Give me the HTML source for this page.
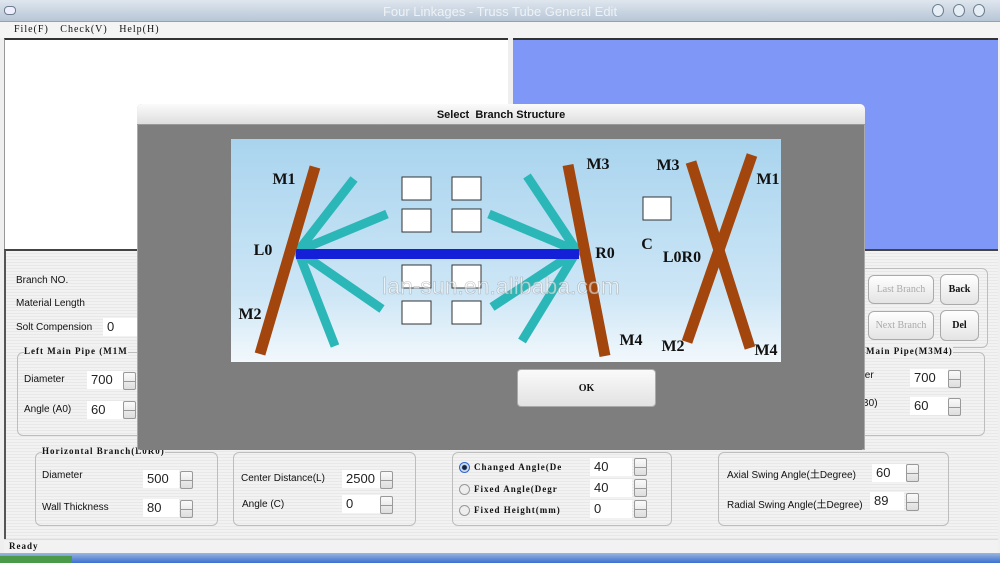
<!DOCTYPE html>
<html><head><meta charset="utf-8"><style>
*{margin:0;padding:0;box-sizing:border-box}
body{width:1000px;height:563px;overflow:hidden;position:relative;background:#efefef;font-family:"Liberation Sans",sans-serif;font-size:10px;color:#111}
.a{position:absolute}
.serif{font-family:"Liberation Serif","Noto Serif CJK SC",serif;font-weight:bold;letter-spacing:1px}
.inp{position:absolute;background:#fff;font-size:13px;padding:1px 4px;height:18px;color:#222}
.spin{position:absolute;width:13px;height:18px;border:1px solid #999;border-radius:2px;background:linear-gradient(#fafafa,#ddd)}
.spin:after{content:"";position:absolute;left:0;right:0;top:8px;border-top:1px solid #999}
.grp{position:absolute;border:1px solid #bdbdbd;border-radius:6px}
.btn{position:absolute;border:1px solid #aaa;border-radius:6px;background:linear-gradient(#fff,#e4e4e4);text-align:center;font-family:"Liberation Serif",serif;font-weight:bold;font-size:10px}
.radio{position:absolute;width:11px;height:11px;border-radius:50%;border:1px solid #999;background:#eee}
</style></head><body>
<div class="a" style="left:0;top:0;width:1000px;height:22px;background:linear-gradient(#dfe6ee,#b7c6d6);border-bottom:1px solid #8fa3b8"></div>
<div class="a" style="left:4px;top:6px;width:12px;height:9px;border:1px solid #6d7d8d;border-radius:4px;background:#eef"></div>
<div class="a" style="left:0;top:4px;width:1000px;text-align:center;font-size:13px;color:#eef2f6">Four Linkages - Truss Tube General Edit</div>
<div class="a" style="left:932px;top:4px;width:12px;height:13px;border:1px solid #6d7d8d;border-radius:50%;background:#e6eef6"></div>
<div class="a" style="left:953px;top:4px;width:12px;height:13px;border:1px solid #6d7d8d;border-radius:50%;background:#e6eef6"></div>
<div class="a" style="left:973px;top:4px;width:12px;height:13px;border:1px solid #6d7d8d;border-radius:50%;background:#e6eef6"></div>
<div class="a" style="left:0;top:22px;width:1000px;height:16px;background:#f4f4f4"></div>
<div class="a serif" style="left:14px;top:24px;font-size:10px;font-weight:normal;word-spacing:8px">File(F) Check(V) Help(H)</div>
<div class="a" style="left:4px;top:38px;width:504px;height:211px;background:#fff;border-top:2px solid #333;border-left:1px solid #999"></div>
<div class="a" style="left:513px;top:38px;width:485px;height:211px;background:#7f98f8;border-top:2px solid #333"></div>
<div class="a" style="left:4px;top:249px;width:994px;height:290px;background:repeating-linear-gradient(#f2f2f2 0 2px,#e8e8e8 2px 3px);border-top:2px solid #444;border-left:2px solid #555"></div>
<div class="a" style="left:16px;top:275px;font-size:10px">Branch NO.</div>
<div class="a" style="left:16px;top:298px;font-size:10px">Material Length</div>
<div class="a" style="left:16px;top:322px;font-size:10px">Solt Compension</div>
<div class="inp" style="left:103px;top:318px;width:36px">0</div>
<div class="grp" style="left:17px;top:352px;width:130px;height:84px"></div>
<div class="a serif" style="left:24px;top:346px;font-size:9px;background:#efefef">Left Main Pipe (M1M</div>
<div class="a" style="left:24px;top:374px">Diameter</div>
<div class="inp" style="left:87px;top:371px;width:36px">700</div><div class="spin" style="left:123px;top:372px"></div>
<div class="a" style="left:24px;top:404px">Angle (A0)</div>
<div class="inp" style="left:87px;top:401px;width:36px">60</div><div class="spin" style="left:123px;top:401px"></div>
<div class="grp" style="left:860px;top:268px;width:128px;height:80px"></div>
<div class="btn" style="left:868px;top:275px;width:66px;height:29px;line-height:28px;color:#aaa;font-weight:normal">Last Branch</div>
<div class="btn" style="left:940px;top:274px;width:39px;height:31px;line-height:30px">Back</div>
<div class="btn" style="left:868px;top:311px;width:66px;height:29px;line-height:28px;color:#aaa;font-weight:normal">Next Branch</div>
<div class="btn" style="left:940px;top:310px;width:39px;height:31px;line-height:30px">Del</div>
<div class="grp" style="left:850px;top:352px;width:135px;height:84px"></div>
<div class="a serif" style="left:866px;top:346px;font-size:9px;background:#efefef">Main Pipe(M3M4)</div>
<div class="a" style="left:862px;top:370px">ter</div>
<div class="inp" style="left:910px;top:369px;width:38px">700</div><div class="spin" style="left:948px;top:370px"></div>
<div class="a" style="left:862px;top:398px">B0)</div>
<div class="inp" style="left:910px;top:397px;width:38px">60</div><div class="spin" style="left:948px;top:398px"></div>
<div class="grp" style="left:35px;top:452px;width:183px;height:74px"></div>
<div class="a serif" style="left:42px;top:446px;font-size:9px;background:#efefef">Horizontal Branch(L0R0)</div>
<div class="a" style="left:42px;top:470px">Diameter</div>
<div class="inp" style="left:143px;top:470px;width:36px">500</div><div class="spin" style="left:180px;top:471px"></div>
<div class="a" style="left:42px;top:502px">Wall Thickness</div>
<div class="inp" style="left:143px;top:499px;width:36px">80</div><div class="spin" style="left:180px;top:500px"></div>
<div class="grp" style="left:233px;top:452px;width:183px;height:74px"></div>
<div class="a" style="left:241px;top:473px">Center Distance(L)</div>
<div class="inp" style="left:342px;top:470px;width:38px">2500</div><div class="spin" style="left:380px;top:471px"></div>
<div class="a" style="left:242px;top:499px">Angle (C)</div>
<div class="inp" style="left:342px;top:495px;width:38px">0</div><div class="spin" style="left:380px;top:496px"></div>
<div class="grp" style="left:452px;top:452px;width:220px;height:74px"></div>
<div class="radio" style="left:459px;top:462px;border-color:#36c;background:radial-gradient(#124 0 2px,#cde 3px)"></div>
<div class="a serif" style="left:474px;top:462px;font-size:9px;font-weight:bold">Changed Angle(De</div>
<div class="inp" style="left:590px;top:458px;width:42px">40</div><div class="spin" style="left:634px;top:458px"></div>
<div class="radio" style="left:459px;top:484px"></div>
<div class="a serif" style="left:474px;top:484px;font-size:9px">Fixed Angle(Degr</div>
<div class="inp" style="left:590px;top:479px;width:42px">40</div><div class="spin" style="left:634px;top:479px"></div>
<div class="radio" style="left:459px;top:505px"></div>
<div class="a serif" style="left:474px;top:505px;font-size:9px">Fixed Height(mm)</div>
<div class="inp" style="left:590px;top:500px;width:42px">0</div><div class="spin" style="left:634px;top:500px"></div>
<div class="grp" style="left:718px;top:452px;width:231px;height:74px"></div>
<div class="a" style="left:727px;top:466px;font-family:'Liberation Sans','Noto Sans CJK SC',sans-serif">Axial Swing Angle(土Degree)</div>
<div class="inp" style="left:872px;top:464px;width:34px">60</div><div class="spin" style="left:906px;top:464px"></div>
<div class="a" style="left:727px;top:496px;font-family:'Liberation Sans','Noto Sans CJK SC',sans-serif">Radial Swing Angle(土Degree)</div>
<div class="inp" style="left:870px;top:492px;width:34px">89</div><div class="spin" style="left:906px;top:493px"></div>
<div class="a" style="left:4px;top:539px;width:994px;height:14px;background:#f2f2f2;border-top:1px solid #ddd"></div>
<div class="a serif" style="left:9px;top:541px;font-size:9px">Ready</div>
<div class="a" style="left:0;top:553px;width:1000px;height:10px;background:linear-gradient(#9bb6e0,#3c6fd0)"></div>
<div class="a" style="left:0;top:556px;width:72px;height:7px;background:#4a9a4a"></div>
<div class="a" style="left:137px;top:104px;width:728px;height:346px;background:#7e7e7e;border:1px solid #aaa;border-radius:5px 5px 0 0"></div>
<div class="a" style="left:137px;top:104px;width:728px;height:21px;background:linear-gradient(#fbfbfb,#dedede);border-radius:5px 5px 0 0;border-bottom:1px solid #999;text-align:center;font-weight:bold;font-size:11px;line-height:22px">Select&nbsp; Branch Structure</div>
<div class="a" style="left:140px;top:125px;width:722px;height:325px;background:#7e7e7e"></div>
<svg class="a" style="left:231px;top:139px" width="550" height="223" viewBox="0 0 550 223">
<defs><linearGradient id="sky" x1="0" y1="0" x2="0" y2="1"><stop offset="0" stop-color="#a9d4ee"/><stop offset="0.7" stop-color="#cde6f6"/><stop offset="1" stop-color="#f2f8fc"/></linearGradient></defs>
<rect width="550" height="223" fill="url(#sky)"/>
<g stroke="#2bb7b7" stroke-width="9">
<line x1="67" y1="112" x2="123" y2="40"/><line x1="67" y1="112" x2="156" y2="75"/><line x1="67" y1="112" x2="151" y2="170"/><line x1="67" y1="112" x2="104" y2="207"/>
<line x1="346" y1="112" x2="296" y2="37"/><line x1="346" y1="112" x2="258" y2="75"/><line x1="346" y1="112" x2="261" y2="168"/><line x1="346" y1="112" x2="291" y2="202"/>
</g>
<line x1="65" y1="115" x2="348" y2="115" stroke="#1420d8" stroke-width="10"/>
<g stroke="#a2460e" stroke-width="11">
<line x1="84" y1="28" x2="29" y2="215"/><line x1="337" y1="26" x2="374" y2="217"/>
<line x1="460" y1="23" x2="519" y2="209"/><line x1="521" y1="16" x2="456" y2="203"/>
</g>
<g fill="#fff" stroke="#333" stroke-width="1">
<rect x="171" y="38" width="29" height="23"/><rect x="221" y="38" width="29" height="23"/>
<rect x="171" y="70" width="29" height="23"/><rect x="221" y="70" width="29" height="23"/>
<rect x="171" y="126" width="29" height="23"/><rect x="221" y="126" width="29" height="23"/>
<rect x="171" y="162" width="29" height="23"/><rect x="221" y="162" width="29" height="23"/>
<rect x="412" y="58" width="28" height="23"/>
</g>
<text x="270" y="155" text-anchor="middle" font-family="Liberation Sans" font-size="23" fill="#ffffff" fill-opacity="0.55" stroke="#888" stroke-opacity="0.5" stroke-width="0.6">lan-sun.en.alibaba.com</text>
<g font-family="Liberation Serif" font-weight="bold" font-size="16" fill="#111" text-anchor="middle">
<text x="53" y="45">M1</text><text x="32" y="116">L0</text><text x="19" y="180">M2</text>
<text x="367" y="30">M3</text><text x="374" y="119">R0</text><text x="400" y="206">M4</text>
<text x="416" y="110">C</text><text x="451" y="123">L0R0</text>
<text x="437" y="31">M3</text><text x="537" y="45">M1</text><text x="442" y="212">M2</text><text x="535" y="216">M4</text>
</g>
</svg>
<div class="btn" style="left:517px;top:369px;width:139px;height:38px;line-height:37px;border-radius:4px;background:linear-gradient(#fafafa,#e2e2e2)">OK</div>
</body></html>
